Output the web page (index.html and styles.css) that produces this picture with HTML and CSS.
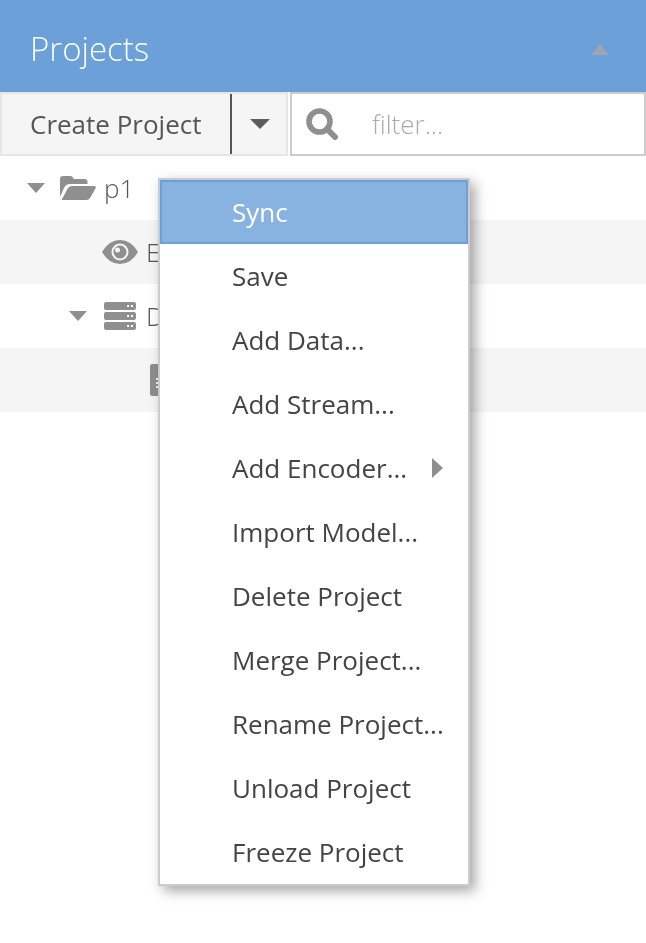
FILE: index.html
```html
<!DOCTYPE html>
<html lang="en">
<head>
<meta charset="utf-8">
<title>Projects</title>
<link rel="stylesheet" href="styles.css">
</head>
<body>
<div class="panel">
  <header class="header">
    <h1 class="title">Projects</h1>
    <svg class="collapse" viewBox="0 0 18 12"><path d="M9 0.5 18 12H0z"/></svg>
  </header>
  <div class="toolbar">
    <div class="split">
      <button class="create">Create Project</button>
      <button class="drop"><svg class="drop-caret" viewBox="0 0 20 10"><path d="M0 0h20L10 10z"/></svg></button>
    </div>
    <div class="filter">
      <svg class="search" viewBox="0 0 32 32"><circle cx="13.5" cy="13.5" r="10.5" fill="none" stroke="#8f8f8f" stroke-width="5.6"/><path d="M21 21l8 8" stroke="#8f8f8f" stroke-width="6" stroke-linecap="round"/></svg>
      <span class="placeholder">filter...</span>
    </div>
  </div>
  <div class="tree">
    <div class="row row-p">
      <svg class="caret" viewBox="0 0 18 10"><path d="M0 0h18L9 10z"/></svg>
      <svg class="folder" viewBox="0 0 36 24"><path d="M0 21V3Q0 0 3 0h7q3 0 3.500 3h11q3 0 3 3v2H10Q6 8 4 12z"/><path d="M1.500 24 8 12q1.500-2 4-2h22q2.500 0 1.500 2.500L30 22q-1 2-3.500 2z"/></svg>
      <span class="label">p1</span>
    </div>
    <div class="row shaded row-e">
      <svg class="eye" viewBox="0 0 36 24"><path fill-rule="evenodd" d="M0 12Q7 0 18 0t18 12Q29 24 18 24T0 12zM18 3.500a8.500 8.500 0 1 0 0 17 8.500 8.500 0 0 0 0-17z"/><path fill-rule="evenodd" d="M18 5.500a6.500 6.500 0 1 1 0 13 6.500 6.500 0 0 1 0-13zM15.500 7.500a2.500 2.500 0 1 0 0 5 2.500 2.500 0 0 0 0-5z"/></svg>
      <span class="label">Explorer</span>
    </div>
    <div class="row row-d">
      <svg class="caret" viewBox="0 0 18 10"><path d="M0 0h18L9 10z"/></svg>
      <svg class="server" viewBox="0 0 32 28"><path fill-rule="evenodd" d="M2 0h28q2 0 2 2v4q0 2-2 2H2Q0 8 0 6V2q0-2 2-2zm21 3v2h2V3zm4 0v2h2V3zM2 10h28q2 0 2 2v4q0 2-2 2H2q-2 0-2-2v-4q0-2 2-2zm21 3v2h2v-2zm4 0v2h2v-2zM2 20h28q2 0 2 2v4q0 2-2 2H2q-2 0-2-2v-4q0-2 2-2zm21 3v2h2v-2zm4 0v2h2v-2z"/></svg>
      <span class="label">Data</span>
    </div>
    <div class="row shaded row-f">
      <svg class="file" viewBox="0 0 24 32"><path fill-rule="evenodd" d="M2 0h20q2 0 2 2v28q0 2-2 2H2q-2 0-2-2V2q0-2 2-2zm4 14h2v2H6zm0 4h2v2H6zm0 4h2v2H6z"/></svg>
    </div>
  </div>
</div>
<ul class="menu">
  <li class="item active">Sync</li>
  <li class="item">Save</li>
  <li class="item">Add Data...</li>
  <li class="item">Add Stream...</li>
  <li class="item">Add Encoder...<svg class="sub" viewBox="0 0 11 20"><path d="M0 0l11 10L0 20z"/></svg></li>
  <li class="item">Import Model...</li>
  <li class="item">Delete Project</li>
  <li class="item">Merge Project...</li>
  <li class="item">Rename Project...</li>
  <li class="item">Unload Project</li>
  <li class="item">Freeze Project</li>
</ul>
</body>
</html>
```
FILE: styles.css
```css
* { box-sizing: border-box; }
html { margin: 0; padding: 0; background: #fff; }
body { margin: 0; padding: 0; width: 646px; height: 943px; overflow: hidden; font-family: "Open Sans", sans-serif; font-size: 26px; color: #444; will-change: transform; }

.header { height: 92px; background: #6ca0d8; display: flex; align-items: center; justify-content: space-between; padding: 4px 37px 0 30px; }
.title { margin: 0; font-size: 33px; font-weight: 300; color: #fff; line-height: 1; }
.collapse { width: 18px; height: 12px; fill: #9da4b2; margin-top: 2px; }

.toolbar { height: 64px; display: flex; gap: 2px; }
.split { width: 288px; display: flex; background: #f5f5f5; border: 2px solid #e6e6e6; }
.create, .drop { border: 0; margin: 0; background: transparent; font: inherit; font-weight: 400; color: #555; padding: 0; display: flex; align-items: center; }
.create { width: 230px; padding-left: 28px; border-right: 2px solid #555; }
.drop { flex: 1; justify-content: flex-start; padding-left: 18px; }
.drop-caret { width: 20px; height: 10px; fill: #5c5c5c; }
.filter { flex: 1; display: flex; align-items: center; border: 2px solid #ccc; padding-left: 14px; }
.search { width: 32px; height: 32px; }
.placeholder { margin-left: 34px; font-weight: 300; color: #aaa; }

.row { height: 64px; display: flex; align-items: center; }
.shaded { background: #f5f5f5; }
.caret { width: 18px; height: 10px; fill: #8f8f8f; }
.folder, .eye, .server, .file { fill: #8f8f8f; flex: none; }
.label { font-weight: 300; color: #555; }
.row-p { padding-left: 27px; }
.row-p .folder { width: 36px; height: 24px; margin-left: 15px; }
.row-p .label { margin-left: 8px; }
.row-e { padding-left: 102px; }
.eye { width: 36px; height: 24px; }
.row-e .label { margin-left: 8px; }
.row-d { padding-left: 69px; }
.server { width: 32px; height: 28px; margin-left: 17px; }
.row-d .label { margin-left: 10px; }
.row-f { padding-left: 150px; }
.file { width: 24px; height: 32px; }

.menu { position: absolute; left: 158px; top: 178px; width: 312px; margin: 0; padding: 0; list-style: none; background: #fff; border: 2px solid #ccc; box-shadow: 5px 5px 12px rgba(0, 0, 0, 0.35); }
.item { height: 64px; padding-left: 72px; display: flex; align-items: center; color: #444; position: relative; white-space: nowrap; }
.active { background: #88b3e0; color: #fff; border: 2px solid #6ca0d8; padding-left: 70px; }
.sub { position: absolute; left: 272px; top: 22px; width: 11px; height: 20px; fill: #8f8f8f; }
```
